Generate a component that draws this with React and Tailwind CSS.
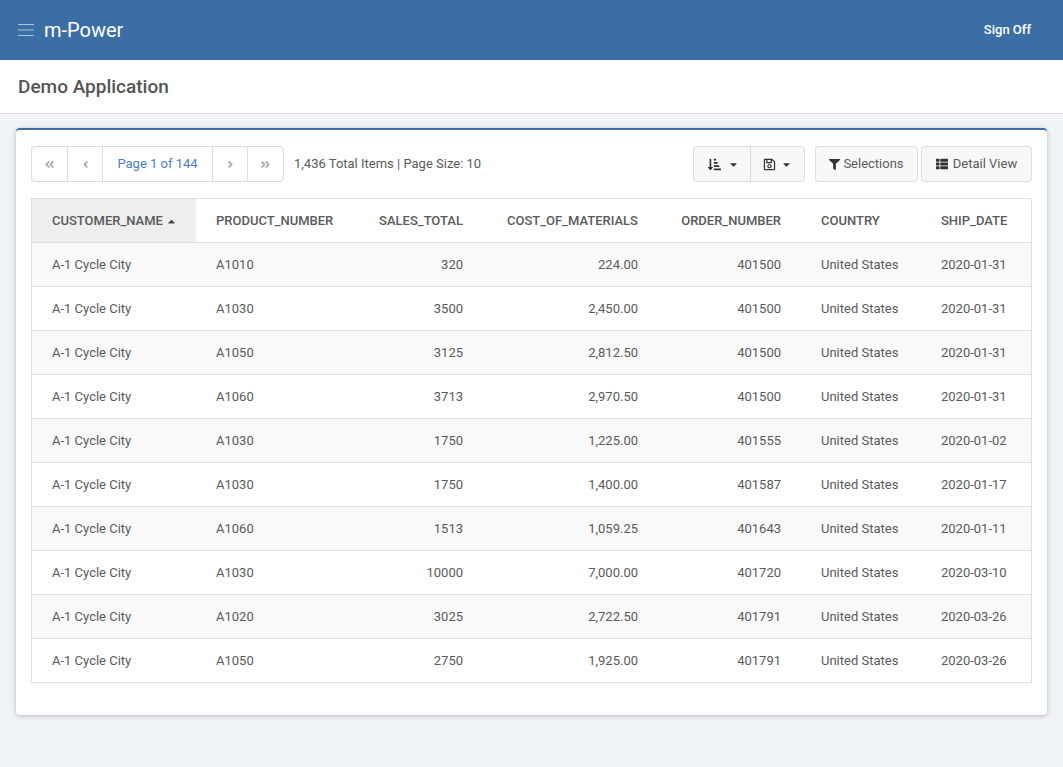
import React from "react";
import {
  FaAngleDoubleLeft,
  FaAngleDoubleRight,
  FaAngleLeft,
  FaAngleRight,
  FaCaretDown,
  FaCaretUp,
  FaFilter,
  FaRegSave,
  FaSortAmountDownAlt,
  FaThList,
} from "react-icons/fa";

const rows = [
  ["A1010", "320", "224.00", "401500", "2020-01-31"],
  ["A1030", "3500", "2,450.00", "401500", "2020-01-31"],
  ["A1050", "3125", "2,812.50", "401500", "2020-01-31"],
  ["A1060", "3713", "2,970.50", "401500", "2020-01-31"],
  ["A1030", "1750", "1,225.00", "401555", "2020-01-02"],
  ["A1030", "1750", "1,400.00", "401587", "2020-01-17"],
  ["A1060", "1513", "1,059.25", "401643", "2020-01-11"],
  ["A1030", "10000", "7,000.00", "401720", "2020-03-10"],
  ["A1020", "3025", "2,722.50", "401791", "2020-03-26"],
  ["A1050", "2750", "1,925.00", "401791", "2020-03-26"],
];

const PagerCell = ({ children, className = "" }) => (
  <div
    className={`h-full flex items-center justify-center border-r border-[#dcdcdc] last:border-r-0 text-[#a3a8ae] text-[11px] ${className}`}
  >
    {children}
  </div>
);

export default function App() {
  return (
    <div className="min-h-[767px] bg-[#f1f4f7] text-[#5a5a5a] text-[13px] font-['Roboto',sans-serif]">
      {/* Top bar */}
      <header className="h-[60px] bg-[#3a6ea5] flex items-center justify-between pl-[18px] pr-8 text-white">
        <div className="flex items-center">
          <svg width="16" height="14" viewBox="0 0 16 14" className="text-[#a9c3de]">
            <path d="M0 1.5h16M0 7h16M0 12.5h16" stroke="currentColor" strokeWidth="1" fill="none" />
          </svg>
          <span className="ml-[10px] text-xl leading-none">m-Power</span>
        </div>
        <span className="text-[13px] font-medium">Sign Off</span>
      </header>

      {/* Page title */}
      <div className="h-[54px] bg-white border-b border-[#dcdfe3] flex items-center pl-[18px] pt-[2px]">
        <h1 className="text-[19px] font-medium text-[#555]">Demo Application</h1>
      </div>

      {/* Card */}
      <div className="mx-4 mt-[14px] h-[587px] bg-white rounded border-t-2 border-[#3a6ea5] shadow-[0_1px_5px_rgba(0,0,0,0.25)] px-[15px] pt-4">
        {/* Toolbar */}
        <div className="flex items-center h-9">
          <div className="flex items-center h-9 border border-[#dcdcdc] rounded">
            <PagerCell className="w-9"><FaAngleDoubleLeft /></PagerCell>
            <PagerCell className="w-[35px]"><FaAngleLeft /></PagerCell>
            <PagerCell className="w-[110px] !text-[13px] !text-[#4a7fc1]">Page 1 of 144</PagerCell>
            <PagerCell className="w-[35px]"><FaAngleRight /></PagerCell>
            <PagerCell className="w-[35px]"><FaAngleDoubleRight /></PagerCell>
          </div>
          <span className="ml-[10px]">1,436 Total Items | Page Size: 10</span>

          <div className="ml-auto flex items-center h-9 border border-[#dcdcdc] rounded bg-[#f8f8f8] text-[#333]">
            <div className="w-[57px] h-full flex items-center justify-center gap-[7px] pl-[2px] border-r border-[#dcdcdc]">
              <FaSortAmountDownAlt className="text-[13px]" />
              <FaCaretDown className="text-[11px]" />
            </div>
            <div className="w-[53px] h-full flex items-center justify-center gap-[5px]">
              <FaRegSave className="text-[13px]" />
              <FaCaretDown className="text-[11px]" />
            </div>
          </div>
          <div className="ml-[10px] w-[103px] h-9 flex items-center justify-center gap-[3px] border border-[#dcdcdc] rounded bg-[#f8f8f8]">
            <FaFilter className="text-[11px] text-[#333]" />
            <span>Selections</span>
          </div>
          <div className="ml-[3px] w-[111px] h-9 flex items-center justify-center gap-[5px] border border-[#dcdcdc] rounded bg-[#f8f8f8]">
            <FaThList className="text-xs text-[#333]" />
            <span>Detail View</span>
          </div>
        </div>

        {/* Table */}
        <table className="mt-4 w-[1000px] table-fixed border-collapse border border-[#dee0e3]">
          <colgroup>
            <col className="w-[164px]" />
            <col className="w-[160.5px]" />
            <col className="w-[127px]" />
            <col className="w-[175px]" />
            <col className="w-[143px]" />
            <col className="w-[120px]" />
            <col className="w-[110.5px]" />
          </colgroup>
          <thead>
            <tr className="h-11 font-medium text-left">
              <th className="pl-5 pr-0 font-medium bg-[#eeeeee] whitespace-nowrap">
                CUSTOMER_NAME
                <FaCaretUp className="inline ml-[3px] text-[11px] text-[#444]" />
              </th>
              <th className="pl-[20.5px] font-medium">PRODUCT_NUMBER</th>
              <th className="pr-5 font-medium text-right">SALES_TOTAL</th>
              <th className="pr-5 font-medium text-right">COST_OF_MATERIALS</th>
              <th className="pr-5 font-medium text-right">ORDER_NUMBER</th>
              <th className="pl-5 font-medium">COUNTRY</th>
              <th className="pl-5 font-medium">SHIP_DATE</th>
            </tr>
          </thead>
          <tbody>
            {rows.map((row, index) => (
              <tr
                key={index}
                className={`h-11 border-t border-[#dee0e3] ${index % 2 === 0 ? "bg-[#f9f9f9]" : "bg-white"}`}
              >
                <td className="pl-5">A-1 Cycle City</td>
                <td className="pl-[20.5px]">{row[0]}</td>
                <td className="pr-5 text-right">{row[1]}</td>
                <td className="pr-5 text-right">{row[2]}</td>
                <td className="pr-5 text-right">{row[3]}</td>
                <td className="pl-5">United States</td>
                <td className="pl-5">{row[4]}</td>
              </tr>
            ))}
          </tbody>
        </table>
      </div>
    </div>
  );
}
